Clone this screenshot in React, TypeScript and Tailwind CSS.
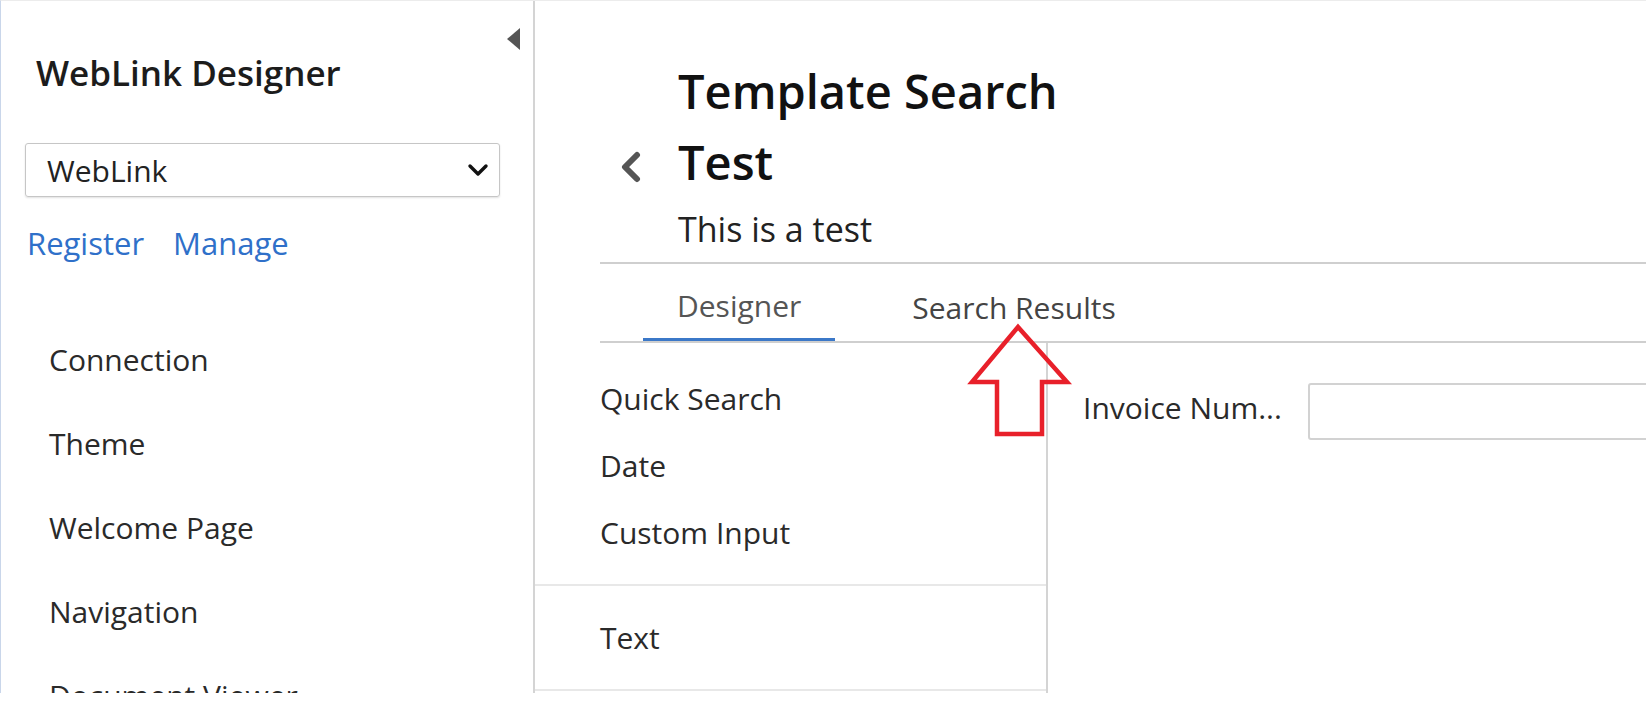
import React from "react";

const menuItems = ["Connection", "Theme", "Welcome Page", "Navigation", "Document Viewer"];

const ChevronDown = () => (
  <svg width="22" height="14" viewBox="0 0 22 14" fill="none">
    <polyline points="3,3 11,11 19,3" stroke="#111" strokeWidth="3.4" strokeLinecap="round" strokeLinejoin="round" />
  </svg>
);

const BackChevron = () => (
  <svg width="24" height="32" viewBox="0 0 24 32" fill="none">
    <polyline points="18,4 6,16 18,28" stroke="#555" strokeWidth="6" strokeLinecap="round" strokeLinejoin="round" />
  </svg>
);

const App = () => {
  return (
    <div className="relative h-[708px] w-[1646px] overflow-hidden bg-white font-['Open_Sans','Noto_Sans',sans-serif]">
      <div className="flex h-[693px] border-l border-t border-l-[#c9d6ea] border-t-[#ececec]">
        {/* left side panel */}
        <aside className="relative w-[534px] shrink-0 overflow-hidden border-r-2 border-[#d4d4d4]">
          <div className="absolute right-[13px] top-[27px] h-0 w-0 border-y-[11px] border-r-[13px] border-y-transparent border-r-[#555]" />
          <h1 className="ml-[35px] mt-[49px] text-[35px] font-semibold leading-[46px] text-[#1c1c1c]">WebLink Designer</h1>
          <div className="ml-[24px] mt-[47px] flex h-[54px] w-[475px] items-center justify-between rounded-[3px] border border-[#c6c6c6] pl-[21px] pr-[10px] shadow-[0_1px_2px_rgba(0,0,0,0.12)]">
            <span className="text-[30px] text-[#222]">WebLink</span>
            <ChevronDown />
          </div>
          <div className="ml-[26px] mt-[26px] flex gap-[29px] text-[31px] leading-[40px] text-[#2f70c9]">
            <a href="#">Register</a>
            <a href="#">Manage</a>
          </div>
          <ul className="ml-[48px] mt-[55px]">
            {menuItems.map(item => (
              <li key={item} className="h-[84px] whitespace-nowrap text-[30px] leading-[84px] text-[#2a2a2a]">
                {item}
              </li>
            ))}
          </ul>
        </aside>

        {/* main designer area */}
        <main className="flex min-w-0 flex-1 flex-col overflow-hidden">
          <div className="flex pl-[84px] pt-[55px]">
            <div className="w-[59px] pt-[71px]">
              <div className="flex h-[71px] items-center pt-[8px]">
                <BackChevron />
              </div>
            </div>
            <div>
              <h2 className="text-[47px] font-semibold leading-[71px] text-[#111]">
                Template Search
                <br />
                Test
              </h2>
              <p className="mt-[9px] text-[34px] leading-[44px] text-[#222]">This is a test</p>
            </div>
          </div>

          <div className="ml-[65px] mt-[11px] flex border-y-2 border-[#cfcfcf] pl-[43px]">
            <div className="flex h-[77px] items-center border-b-[3px] border-[#3b78c8] px-[34px] pt-[9px] text-[30px] text-[#555]">
              Designer
            </div>
            <div className="ml-[43px] flex h-[77px] items-center px-[34px] pt-[9px] text-[30px] text-[#444]">
              Search Results
            </div>
          </div>

          <div className="flex flex-1">
            <div className="w-[513px] shrink-0 border-r-2 border-[#d4d4d4]">
              <div className="border-b-2 border-[#e8e8e8] pb-[18px] pl-[65px] pt-[22px]">
                {["Quick Search", "Date", "Custom Input"].map(t => (
                  <div key={t} className="h-[67px] text-[30px] leading-[67px] text-[#2a2a2a]">
                    {t}
                  </div>
                ))}
              </div>
              <div className="border-b-2 border-[#e8e8e8] py-[18px] pl-[65px]">
                <div className="h-[67px] text-[30px] leading-[67px] text-[#2a2a2a]">Text</div>
              </div>
            </div>
            <div className="flex flex-1 items-start pl-[35px] pt-[40px]">
              <label className="w-[225px] shrink-0 whitespace-nowrap text-[30px] leading-[49px] text-[#2a2a2a]">Invoice Num...</label>
              <div className="h-[57px] w-[420px] shrink-0 rounded-[3px] border-2 border-[#d2d2d2]" />
            </div>
          </div>
        </main>
      </div>

      {/* red annotation arrow */}
      <svg className="pointer-events-none absolute left-0 top-0" width="1646" height="708" viewBox="0 0 1646 708" fill="none">
        <polygon
          points="1018,327 1067,382 1042,382 1042,434 997,434 997,382 972,382"
          stroke="#e8202a"
          strokeWidth="4.5"
          strokeLinejoin="miter"
        />
      </svg>
    </div>
  );
};

export default App;
